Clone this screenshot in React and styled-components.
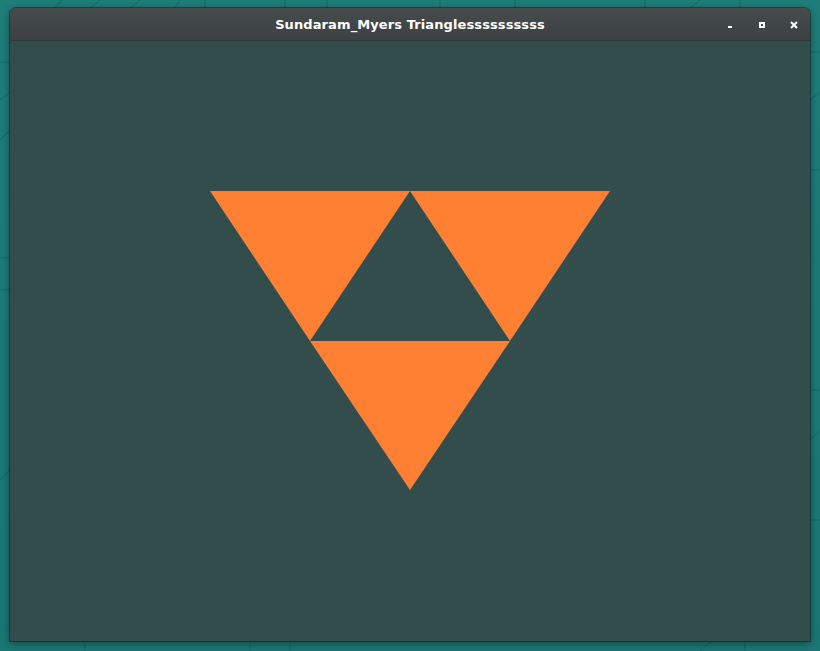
import React from "react";
import styled, { createGlobalStyle } from "styled-components";

const Global = createGlobalStyle`
  html, body { margin: 0; padding: 0; }
  body { background: #1d7975; font-family: "DejaVu Sans", "Noto Sans", sans-serif; overflow: hidden; }
`;

const Desktop = styled.div`
  position: relative;
  width: 820px;
  height: 651px;
  box-sizing: border-box;
  padding: 8px 10px 0;
  background: linear-gradient(180deg, #1f7e7a 0%, #1b7773 100%);
  overflow: hidden;
`;

const Wallpaper = styled.svg`
  position: absolute;
  inset: 0;
  pointer-events: none;
`;

const Window = styled.div`
  position: relative;
  width: 800px;
  display: flex;
  flex-direction: column;
  border-radius: 6px 6px 0 0;
  overflow: hidden;
  box-shadow: 0 2px 8px rgba(0, 0, 0, 0.45), 0 0 0 1px rgba(0, 0, 0, 0.35);
`;

const TitleBar = styled.div`
  height: 33px;
  display: grid;
  grid-template-columns: 1fr auto 1fr;
  align-items: center;
  background: linear-gradient(180deg, #464b4b 0%, #3d4141 100%);
  border-bottom: 1px solid #343737;
  box-sizing: border-box;
`;

const Title = styled.div`
  grid-column: 2;
  color: #ffffff;
  font-family: "DejaVu Sans", sans-serif;
  font-weight: 700;
  font-size: 13px;
  letter-spacing: 0.1px;
  padding-top: 1px;
`;

const Controls = styled.div`
  grid-column: 3;
  justify-self: end;
  display: flex;
  align-items: center;
`;

const CtrlButton = styled.div`
  width: 32px;
  height: 32px;
  display: flex;
  align-items: center;
  justify-content: center;
  padding-top: 2px;
  box-sizing: border-box;
`;

const Canvas = styled.svg`
  display: block;
  width: 800px;
  height: 600px;
  background: #334d4d;
`;

export default function App() {
  return (
    <>
      <Global />
      <Desktop>
        <Wallpaper width="820" height="651" viewBox="0 0 820 651">
          <g stroke="#156561" strokeWidth="1" fill="none" opacity="0.8">
            <line x1="55" y1="8" x2="62" y2="0" />
            <line x1="90" y1="8" x2="100" y2="0" />
            <line x1="130" y1="8" x2="140" y2="0" />
            <line x1="175" y1="8" x2="180" y2="0" />
            <line x1="285" y1="0" x2="285" y2="8" />
            <line x1="205" y1="0" x2="205" y2="8" />
            <line x1="327" y1="0" x2="327" y2="8" />
            <line x1="440" y1="0" x2="440" y2="8" />
            <line x1="515" y1="0" x2="515" y2="8" />
            <line x1="645" y1="0" x2="645" y2="8" />
            <line x1="690" y1="8" x2="700" y2="0" />
            <line x1="740" y1="0" x2="740" y2="8" />
            <line x1="0" y1="62" x2="10" y2="62" />
            <line x1="0" y1="258" x2="10" y2="258" />
            <line x1="0" y1="290" x2="10" y2="290" />
            <line x1="0" y1="100" x2="10" y2="92" />
            <line x1="0" y1="140" x2="10" y2="130" />
            <line x1="0" y1="480" x2="10" y2="470" />
            <line x1="810" y1="52" x2="820" y2="52" />
            <line x1="810" y1="170" x2="820" y2="170" />
            <line x1="810" y1="390" x2="820" y2="390" />
            <line x1="810" y1="520" x2="820" y2="520" />
            <line x1="810" y1="100" x2="820" y2="92" />
            <line x1="810" y1="440" x2="820" y2="430" />
            <line x1="85" y1="641" x2="85" y2="651" />
            <line x1="250" y1="641" x2="250" y2="651" />
            <line x1="290" y1="641" x2="290" y2="651" />
            <line x1="700" y1="651" x2="712" y2="641" />
            <line x1="745" y1="641" x2="745" y2="651" />
          </g>
        </Wallpaper>
        <Window>
          <TitleBar>
            <Title>Sundaram_Myers Trianglessssssssss</Title>
            <Controls>
              <CtrlButton>
                <svg width="8" height="8" viewBox="0 0 8 8">
                  <rect x="2" y="5" width="4" height="2" fill="#fff" />
                </svg>
              </CtrlButton>
              <CtrlButton>
                <svg width="8" height="8" viewBox="0 0 8 8">
                  <rect x="1" y="1" width="6" height="6" fill="#fff" />
                  <rect x="3" y="3" width="2" height="2" fill="#434848" />
                </svg>
              </CtrlButton>
              <CtrlButton>
                <svg width="8" height="8" viewBox="0 0 8 8">
                  <path d="M1 1 L7 7 M7 1 L1 7" stroke="#fff" strokeWidth="2" />
                </svg>
              </CtrlButton>
            </Controls>
          </TitleBar>
          <Canvas viewBox="0 0 800 600">
            <polygon points="200,150 400,150 300,300" fill="#ff7f33" />
            <polygon points="400,150 600,150 500,300" fill="#ff7f33" />
            <polygon points="300,300 500,300 400,449" fill="#ff7f33" />
          </Canvas>
        </Window>
      </Desktop>
    </>
  );
}
